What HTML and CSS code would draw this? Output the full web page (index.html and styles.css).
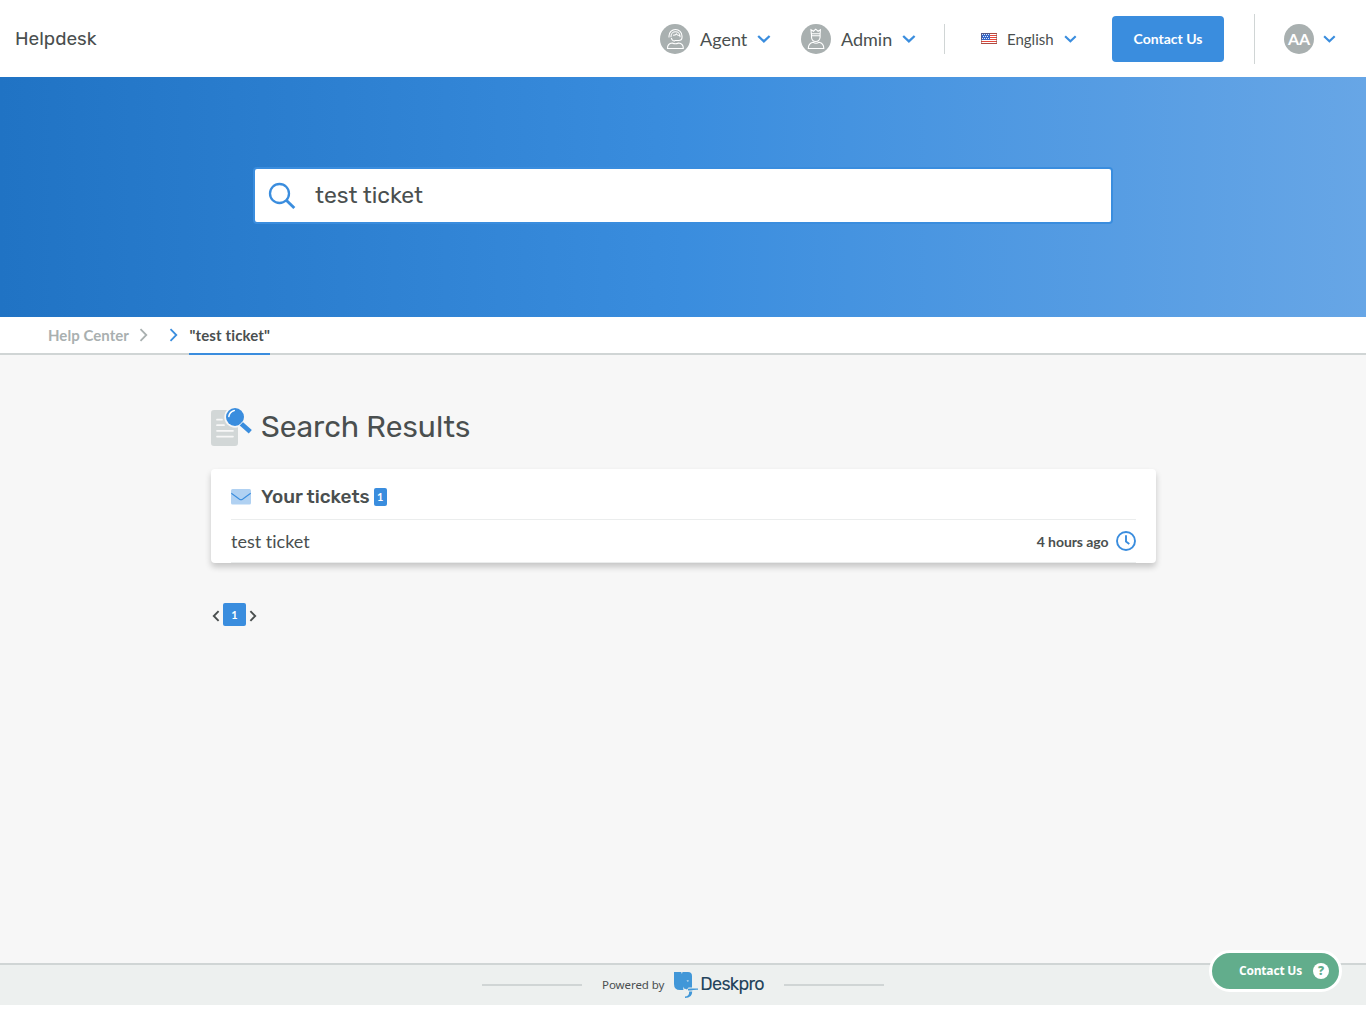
FILE: index.html
```html
<!DOCTYPE html>
<html lang="en">
<head>
<meta charset="utf-8">
<title>Helpdesk - Search Results</title>
<link rel="stylesheet" href="styles.css">
</head>
<body>
<header class="header">
  <a class="brand"><span>Helpdesk</span></a>
  <nav class="nav">
    <a class="nav-item agent">
      <svg class="avatar" viewBox="0 0 30 30"><circle cx="15" cy="15" r="15" fill="#a9b0b0"/><g fill="none" stroke="#fff" stroke-width="1.1"><path d="M9 13.500v-1.500a6.500 6.500 0 0 1 13 0v1.500q0 3-3.500 3h-4M11 13.200v-1a4.500 4.500 0 0 1 9 0v1M13 11.300q2.500 0 3.400-1.300 1 1.300 3 1.500M11.300 14q.7 3 3.500 3.300"/><path d="M12.300 19q-5 .5-4.800 5.500h15.800q.1-5-4.800-5.500-3.100 1.600-6.200 0z"/></g></svg>
      <span>Agent</span>
      <svg class="chevron" viewBox="0 0 14 8"><path d="M1.200 1l5.700 5.400L12.600 1"/></svg>
    </a>
    <a class="nav-item admin">
      <svg class="avatar" viewBox="0 0 30 30"><circle cx="15" cy="15" r="15" fill="#a9b0b0"/><g fill="none" stroke="#fff" stroke-width="1.100"><path d="M10.300 9.800l-.3-4.100 2.500 1.500L14.700 5.200l2.400 2 2.300-1.500-.3 4.100zM10.500 9.800v3.400q.3 4.300 4.200 4.300t4.400-4.300V9.800M10.500 11.800h8.500"/><path d="M12 18.200q-4.700 1-4.700 6.300h15.500q0-5.300-4.700-6.300-3 2-6.100 0z"/></g></svg>
      <span>Admin</span>
      <svg class="chevron" viewBox="0 0 14 8"><path d="M1.200 1l5.700 5.400L12.600 1"/></svg>
    </a>
    <i class="rule rule-short"></i>
    <a class="nav-item language">
      <svg class="flag" viewBox="0 0 16 11"><path fill="#fff" d="M0 0h16v11H0z"/><path stroke="#e4483d" d="M0 .5h16M0 2.500h16M0 4.500h16M0 6.500h16M0 8.500h16M0 10.500h16"/><path fill="#3567c8" d="M0 0h9v7H0z"/><path stroke="#dfe8fa" stroke-dasharray="1 1" d="M1 1.500h7M2 3.500h6M1 5.500h7"/><path fill="none" stroke="#784c45" stroke-opacity=".5" d="M.5.500h15v10H.5z"/></svg>
      <span>English</span>
      <svg class="chevron small" viewBox="0 0 14 8"><path d="M1.200 1l5.700 5.400L12.600 1"/></svg>
    </a>
    <a class="contact">Contact Us</a>
    <i class="rule rule-tall"></i>
    <a class="nav-item user"><b>AA</b>
      <svg class="chevron small" viewBox="0 0 14 8"><path d="M1.200 1l5.700 5.400L12.600 1"/></svg>
    </a>
  </nav>
</header>

<section class="hero">
  <div class="search">
    <svg viewBox="0 0 28 28" fill="none" stroke="#3a8dde" stroke-width="2.300"><circle cx="11.500" cy="11.500" r="9.500"/><path d="M18.300 18.300l8 7.700" stroke-width="2.900"/></svg>
    <span>test ticket</span>
  </div>
</section>

<div class="breadcrumb">
  <a class="home">Help Center</a>
  <svg viewBox="0 0 9 14" stroke="#a9b0b0"><path d="M1.500 1.200l5.800 5.800-5.800 5.800"/></svg>
  <svg class="current-arrow" viewBox="0 0 9 14" stroke="#3a8dde"><path d="M1.500 1.200l5.800 5.800-5.800 5.800"/></svg>
  <span class="current">"test ticket"</span>
</div>

<main class="main">
  <h1 class="title">
    <svg viewBox="0 0 42 40"><path fill="#d2d7d7" d="M3 3h21v12l3 4v17q0 3-3 3H3q-3 0-3-3V6q0-3 3-3z"/><path stroke="#f7f7f7" stroke-width="1.700" stroke-linecap="round" d="M6 12.700h5M6 18.200h7M6 23.800h16M6 29.600h16"/><circle cx="24" cy="10" r="10.700" fill="#f7f7f7"/><circle cx="24" cy="10" r="9" fill="#3a8dde"/><path d="M30 16.500l9.300 8.300" stroke="#3a8dde" stroke-width="4.600"/><path d="M27.800 18.800l4-4" stroke="#f7f7f7"/><path d="M17.800 9.500q.8-4.700 5.500-6" fill="none" stroke="#fff" stroke-width="1.500" stroke-linecap="round"/></svg>
    <span>Search Results</span>
  </h1>
  <section class="card">
    <h2 class="card-title">
      <svg viewBox="0 0 20 16"><rect width="20" height="15.500" rx="1.500" fill="#b0d1f2"/><path d="M.3 4.300l8.200 6q1.500 1 3 0l8.200-6" fill="none" stroke="#3a8dde" stroke-width="1.100"/></svg>
      <span>Your tickets</span><b>1</b>
    </h2>
    <div class="ticket">
      <a><span>test ticket</span></a>
      <time>4 hours ago</time>
      <svg viewBox="0 0 20 20" fill="none" stroke="#3a8dde"><circle cx="10" cy="10" r="9" stroke-width="1.900"/><path d="M10 4.300v6.200l3.300 2.400" stroke-width="1.900"/></svg>
    </div>
  </section>
  <div class="pager">
    <svg viewBox="0 0 8 12"><path d="M6.600 1.200L1.800 6l4.800 4.800"/></svg>
    <b>1</b>
    <svg viewBox="0 0 8 12"><path d="M1.400 1.200L6.200 6l-4.800 4.800"/></svg>
  </div>
</main>

<footer class="footer">
  <i></i>
  <span class="powered">Powered by</span>
  <svg class="logo" viewBox="0 0 24 27"><path fill="#4197d8" d="M0 0h14q4 0 4 4v11.500h-3.500L13 17.500l-2.500-1L9 18H6q-6 0-6-6z"/><path fill="#edf0ef" d="M7.200 0h1.300l-.6 2zM12.500 8.200l2.700.6-1.500 1zM9.300 14.500l.9 2.500-1 .6z"/><path fill="#4197d8" d="M14 16.800l3-.4h7v1.300q-4.500-.2-7 .8h-3zM15.200 19.500h3q.2 6.500-7.200 6.500v-1.500q4.200 0 4.200-5z"/></svg>
  <span class="logo-name">Deskpro</span>
  <i></i>
</footer>

<a class="widget"><span>Contact Us</span><b>?</b></a>
</body>
</html>
```
FILE: styles.css
```css
* { box-sizing: border-box; }
body {
  margin: 0;
  background: #fff;
  color: #4a4f4f;
  font-family: Lato, "Liberation Sans", sans-serif;
  font-variant-ligatures: none;
  min-height: 1009px;
}
svg { display: block; flex: none; }
.header {
  display: flex;
  align-items: center;
  justify-content: space-between;
  height: 77px;
  padding: 0 30px 0 15px;
}
.brand { font: 400 19px/24px Rubik, Roboto, sans-serif; }
.nav { display: flex; align-items: center; height: 77px; padding-top: 1px; }
.nav-item { display: flex; align-items: center; font-size: 18px; line-height: 30px; }
.avatar { width: 30px; height: 30px; }
.chevron { width: 14px; height: 8px; fill: none; stroke: #3a8dde; stroke-width: 2.3; }
.chevron.small { width: 13px; }
.agent { width: 141px; gap: 10px; }
.admin { width: 143px; gap: 10px; }
.rule { width: 1px; background: #d0d5d5; }
.rule-short { height: 30px; }
.rule-tall { height: 50px; margin: 0 29px 0 30px; }
.language { width: 131px; margin-left: 36px; font-size: 15px; }
.flag { width: 16px; height: 11px; margin: -1px 10px 0 0; }
.language .chevron { margin-left: 10px; }
.contact {
  width: 112px;
  height: 46px;
  border-radius: 4px;
  background: #3a8dde;
  color: #fff;
  font-size: 14px;
  font-weight: 700;
  line-height: 46px;
  text-align: center;
}
.user { gap: 9px; }
.user b {
  width: 30px;
  height: 30px;
  border-radius: 50%;
  background: #a9b0b0;
  color: #fff;
  font-size: 16px;
  line-height: 29px;
  text-align: center;
}
.hero {
  display: flex;
  justify-content: center;
  height: 240px;
  padding-top: 90px;
  background: linear-gradient(90deg, #2073c4 0%, #3a8dde 50%, #67a6e6 100%);
}
.search {
  display: flex;
  align-items: center;
  width: 860px;
  height: 57px;
  padding-left: 13px;
  border: 2px solid #3a8dde;
  border-radius: 4px;
  background: #fff;
  font: 400 23px/30px Rubik, Roboto, sans-serif;
}
.search span { margin-top: -2px; }
.search svg { width: 28px; height: 28px; margin-right: 19px; }
.breadcrumb {
  display: flex;
  align-items: center;
  height: 38px;
  padding-left: 48px;
  border-bottom: 2px solid #d0d5d5;
  font-size: 15px;
  font-weight: 700;
}
.breadcrumb svg { width: 9px; height: 14px; fill: none; stroke-width: 1.8; }
.home { color: #a9b0b0; margin-right: 10px; letter-spacing: .04px; }
.breadcrumb .current-arrow { margin: 0 11.500px 0 21px; }
.current {
  height: 38px;
  margin-bottom: -2px;
  border-bottom: 2px solid #3a8dde;
  line-height: 37px;
  letter-spacing: .13px;
}
.main { height: 608px; padding: 52px 210px 0 211px; background: #f7f7f7; }
.title {
  display: flex;
  align-items: center;
  height: 40px;
  margin: 0 0 22px;
  font: 400 30px/40px Rubik, Roboto, sans-serif;
}
.title svg { width: 42px; height: 40px; margin-right: 8px; }
.card {
  height: 94px;
  padding: 0 20px;
  border-radius: 4px;
  background: #fff;
  box-shadow: 0 4px 6px rgba(0, 0, 0, .2);
}
.card-title {
  display: flex;
  align-items: center;
  height: 51px;
  margin: 0;
  padding-top: 6px;
  border-bottom: 1px solid #ebeded;
  font: 500 19px/24px Rubik, Roboto, sans-serif;
}
.card-title svg { width: 20px; height: 16px; margin-right: 10px; }
.card-title b {
  width: 13px;
  height: 18px;
  margin-left: 4px;
  border-radius: 2px;
  background: #3a8dde;
  color: #fff;
  font: 700 11px/18px Lato, sans-serif;
  text-align: center;
}
.ticket { display: flex; align-items: center; height: 43px; border-bottom: 1px solid #ebeded; }
.ticket a { flex: 1; font-size: 18px; }
.ticket time { margin-right: 7.500px; padding-top: 1px; font-size: 14px; font-weight: 700; letter-spacing: -.07px; }
.ticket svg { width: 20px; height: 20px; }
.pager { display: flex; align-items: center; gap: 3px; margin-top: 40px; padding-left: 1px; }
.pager svg { width: 8px; height: 12px; margin-top: 2px; fill: none; stroke: #4a4f4f; stroke-width: 1.9; }
.pager b {
  width: 23px;
  height: 23px;
  border-radius: 2px;
  background: #3a8dde;
  color: #fff;
  font-size: 11px;
  line-height: 24px;
  text-align: center;
}
.footer {
  display: flex;
  align-items: center;
  justify-content: center;
  height: 42px;
  border-top: 2px solid #d0d5d5;
  background: #edf0ef;
}
.footer i { width: 100px; height: 2px; background: #d0d5d5; }
.powered { margin: 0 9.500px 0 20px; font: 400 11.5px/16px "Noto Sans", sans-serif; letter-spacing: -.07px; }
.logo { width: 24px; height: 27px; margin-right: 2.500px; }
.logo-name { margin: -2px 20px 0 0; color: #24435c; font: 400 18px/24px Rubik, Roboto, sans-serif; letter-spacing: -.73px; }
.widget {
  position: fixed;
  right: 24px;
  bottom: 17px;
  display: flex;
  align-items: center;
  width: 133px;
  height: 42px;
  padding-left: 27px;
  border: 3px solid #fff;
  border-radius: 21px;
  background: #62ad8c;
  color: #fff;
  font: 700 12px/16px "Open Sans", sans-serif;
}
.widget span { width: 74px; letter-spacing: -.2px; }
.widget b { width: 16px; height: 16px; border-radius: 50%; background: #fff; color: #62ad8c; text-align: center; }
```
